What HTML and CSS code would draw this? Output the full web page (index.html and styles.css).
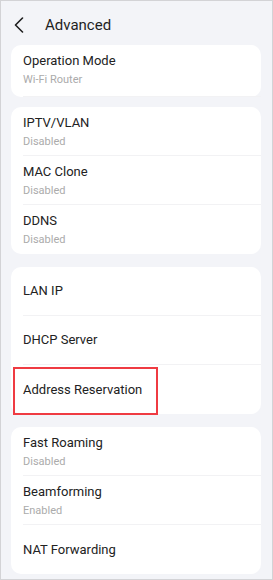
FILE: index.html
```html
<!DOCTYPE html>
<html lang="en">
<head>
  <meta charset="UTF-8" />
  <meta name="viewport" content="width=device-width, initial-scale=1.0"/>
  <title>Advanced</title>
  <link rel="stylesheet" href="styles.css">
</head>
<body>
<div class="screen">
  <header class="topbar">
    <span class="back">
      <svg width="10" height="16" viewBox="0 0 10 16"><path d="M8.5 1 L1.5 8 L8.5 15" fill="none" stroke="#1f1f1f" stroke-width="1.6" stroke-linecap="round" stroke-linejoin="round"/></svg>
    </span>
    <h1>Advanced</h1>
  </header>

  <section class="card first">
    <div class="row two tall">
      <div class="title">Operation Mode</div>
      <div class="sub">Wi-Fi Router</div>
    </div>
  </section>

  <section class="card gap-s">
    <div class="row two">
      <div class="title">IPTV/VLAN</div>
      <div class="sub">Disabled</div>
    </div>
    <div class="row two">
      <div class="title">MAC Clone</div>
      <div class="sub">Disabled</div>
    </div>
    <div class="row two last">
      <div class="title">DDNS</div>
      <div class="sub">Disabled</div>
    </div>
  </section>

  <section class="card gap-l">
    <div class="row one">
      <div class="title">LAN IP</div>
    </div>
    <div class="row one">
      <div class="title">DHCP Server</div>
    </div>
    <div class="row one last marked">
      <div class="title">Address Reservation</div>
      <span class="highlight"></span>
    </div>
  </section>

  <section class="card gap-l">
    <div class="row two">
      <div class="title">Fast Roaming</div>
      <div class="sub">Disabled</div>
    </div>
    <div class="row two">
      <div class="title">Beamforming</div>
      <div class="sub">Enabled</div>
    </div>
    <div class="row one last">
      <div class="title">NAT Forwarding</div>
    </div>
  </section>
</div>
</body>
</html>
```

FILE: styles.css
```css
* { margin: 0; padding: 0; box-sizing: border-box; }
html, body {
  width: 273px;
  height: 580px;
  overflow: hidden;
  font-family: Roboto, "Noto Sans", Arial, sans-serif;
  background: #fff;
}
.screen {
  width: 273px;
  height: 580px;
  background: #f3f4f8;
  border: 1px solid #d3d3d6;
  padding: 0 11px 0 10px;
}
.topbar {
  height: 44px;
  padding-top: 4px;
  display: flex;
  align-items: center;
}
.back {
  width: 34px;
  padding-left: 3px;
  display: flex;
  align-items: center;
}
.topbar h1 {
  font-size: 15px;
  font-weight: 400;
  color: #1f1f1f;
}
.card {
  background: #fff;
  border-radius: 10px;
}
.gap-s { margin-top: 10px; }
.gap-l { margin-top: 13px; }

.row {
  margin-left: 12px;
  border-bottom: 1px solid #f2f2f4;
  position: relative;
}
.row.last { border-bottom: none; }
.row.two {
  height: 49px;
  padding-top: 7px;
}
.row.two.tall {
  height: 52px;
}
.row.one {
  height: 49px;
  display: flex;
  align-items: center;
}
.title {
  font-size: 13px;
  line-height: 18px;
  color: #222;
}
.sub {
  font-size: 11px;
  line-height: 19px;
  color: #ababab;
}
.highlight {
  position: absolute;
  left: -10px;
  top: 2px;
  width: 145px;
  height: 48px;
  border: 2.5px solid #ef3b42;
}
```
